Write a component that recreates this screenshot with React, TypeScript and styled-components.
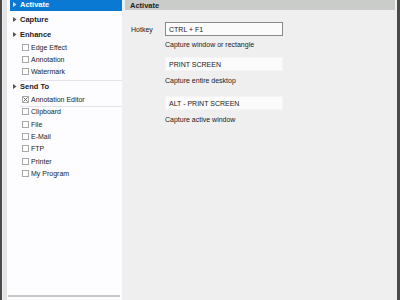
import React from "react";
import styled, { createGlobalStyle } from "styled-components";

const GlobalStyle = createGlobalStyle`
	html, body {
		margin: 0;
		padding: 0;
		width: 400px;
		height: 300px;
		overflow: hidden;
		background: #f0f0f0;
	}
	* {
		box-sizing: border-box;
	}
`;

type TreeNode = {
	label: string;
	children?: { label: string; checked?: boolean; line?: boolean }[];
	selected?: boolean;
	line?: boolean;
};

const tree: TreeNode[] = [
	{ label: "Activate", selected: true },
	{ label: "Capture" },
	{
		label: "Enhance",
		line: true,
		children: [{ label: "Edge Effect" }, { label: "Annotation" }, { label: "Watermark" }],
	},
	{
		label: "Send To",
		children: [
			{ label: "Annotation Editor", checked: true, line: true },
			{ label: "Clipboard" },
			{ label: "File" },
			{ label: "E-Mail" },
			{ label: "FTP" },
			{ label: "Printer" },
			{ label: "My Program" },
		],
	},
];

const hotkeys = [
	{ key: "CTRL + F1", hint: "Capture window or rectangle", active: true },
	{ key: "PRINT SCREEN", hint: "Capture entire desktop" },
	{ key: "ALT - PRINT SCREEN", hint: "Capture active window", spaced: true },
];

const Arrow = () => (
	<svg width="4" height="5" viewBox="0 0 4 5">
		<path d="M0 0 L3.5 2.5 L0 5 Z" fill="currentColor" />
	</svg>
);

const CheckMark = () => (
	<svg width="5" height="5" viewBox="0 0 5 5">
		<path d="M0.5 0.5 L4.5 4.5 M4.5 0.5 L0.5 4.5" stroke="#707070" strokeWidth="1" />
	</svg>
);

const App = () => {
	return (
		<>
			<GlobalStyle />
			<Window>
				<TreePanel>
					<TreeList>
						{tree.map((node) => (
							<React.Fragment key={node.label}>
								<GroupRow $selected={node.selected}>
									<ArrowBox $selected={node.selected}>
										<Arrow />
									</ArrowBox>
									{node.label}
								</GroupRow>
								{node.children?.map((child) => (
									<React.Fragment key={child.label}>
										<ItemRow>
											<Box>{child.checked && <CheckMark />}</Box>
											{child.label}
										</ItemRow>
										{child.line && <Separator $tight />}
									</React.Fragment>
								))}
								{node.line && <Separator />}
							</React.Fragment>
						))}
					</TreeList>
					<BottomRule />
				</TreePanel>
				<Content>
					<Header>Activate</Header>
					<Form>
						{hotkeys.map((hk, i) => (
							<FieldRow key={hk.key} $spaced={hk.spaced}>
								<FieldLabel>{i === 0 ? "Hotkey" : ""}</FieldLabel>
								<FieldStack>
									<KeyInput $active={hk.active}>{hk.key}</KeyInput>
									<Hint $first={i === 0}>{hk.hint}</Hint>
								</FieldStack>
							</FieldRow>
						))}
					</Form>
				</Content>
			</Window>
		</>
	);
};

const Window = styled.div`
	display: flex;
	width: 400px;
	height: 303px;
	margin-top: -3px;
	border-left: 2px solid #4a4a4a;
	border-right: 3px solid #4a4a4a;
	background: #f0f0f0;
	font-family: "Liberation Sans", Arial, sans-serif;
	font-size: 7px;
	color: #202020;
`;

const TreePanel = styled.div`
	display: flex;
	flex-direction: column;
	width: 119px;
	margin-left: 1px;
	border-left: 4px solid #e4e4e4;
	background: #fdfdff;
	box-shadow: 1px 0 2px rgba(0, 0, 0, 0.12);
`;

const TreeList = styled.div`
	flex: 1;
	display: flex;
	flex-direction: column;
	padding-left: 3px;
`;

const GroupRow = styled.div<{ $selected?: boolean }>`
	display: flex;
	align-items: center;
	height: 15px;
	padding: 2px 0 0 3px;
	font-size: 7.5px;
	font-weight: bold;
	background: ${(p) => (p.$selected ? "#0a79d4" : "transparent")};
	color: ${(p) => (p.$selected ? "#ffffff" : "#1a1a1a")};
	&:first-child {
		height: 14px;
		padding-top: 0;
	}
`;

const ArrowBox = styled.span<{ $selected?: boolean }>`
	display: flex;
	width: 7px;
	color: ${(p) => (p.$selected ? "#cfe4f7" : "#555")};
`;

const ItemRow = styled.div`
	display: flex;
	align-items: center;
	height: 12.4px;
	padding-left: 12px;
	color: #222;
`;

const Box = styled.span`
	display: flex;
	align-items: center;
	justify-content: center;
	width: 7px;
	height: 7px;
	margin-right: 2px;
	border: 1px solid #a8a8a8;
	background: #fff;
`;

const Separator = styled.div<{ $tight?: boolean }>`
	height: 1px;
	margin: ${(p) => (p.$tight ? "0 0 -1px 10px" : "2px 0 -3px 10px")};
	background: #e4e4e8;
`;

const BottomRule = styled.div`
	height: 2px;
	margin: 0 2px 3px 1px;
	background: #c8c8c8;
`;

const Content = styled.div`
	flex: 1;
	display: flex;
	flex-direction: column;
	padding: 0 2px 0 3px;
	background: #f0eff0;
`;

const Header = styled.div`
	height: 13px;
	padding: 4px 0 0 5px;
	background: #c9ccc9;
	font-size: 7.5px;
	font-weight: bold;
	color: #1e1e1e;
`;

const Form = styled.div`
	display: flex;
	flex-direction: column;
	gap: 6px;
	padding: 12px 0 0 6px;
`;

const FieldRow = styled.div<{ $spaced?: boolean }>`
	display: flex;
	margin-top: ${(p) => (p.$spaced ? "3px" : "0")};
`;

const FieldLabel = styled.div`
	width: 34px;
	padding-top: 4px;
`;

const FieldStack = styled.div`
	display: flex;
	flex-direction: column;
	gap: 4px;
`;

const KeyInput = styled.div<{ $active?: boolean }>`
	width: 118px;
	height: 14px;
	padding: 3px 0 0 3px;
	background: #fbfbfb;
	border: 1px solid ${(p) => (p.$active ? "#8a8a8a" : "#f4f4f4")};
	color: #1a1a1a;
`;

const Hint = styled.div<{ $first?: boolean }>`
	height: ${(p) => (p.$first ? "11px" : "12px")};
	padding-top: ${(p) => (p.$first ? "1px" : "2px")};
`;

export default App;
